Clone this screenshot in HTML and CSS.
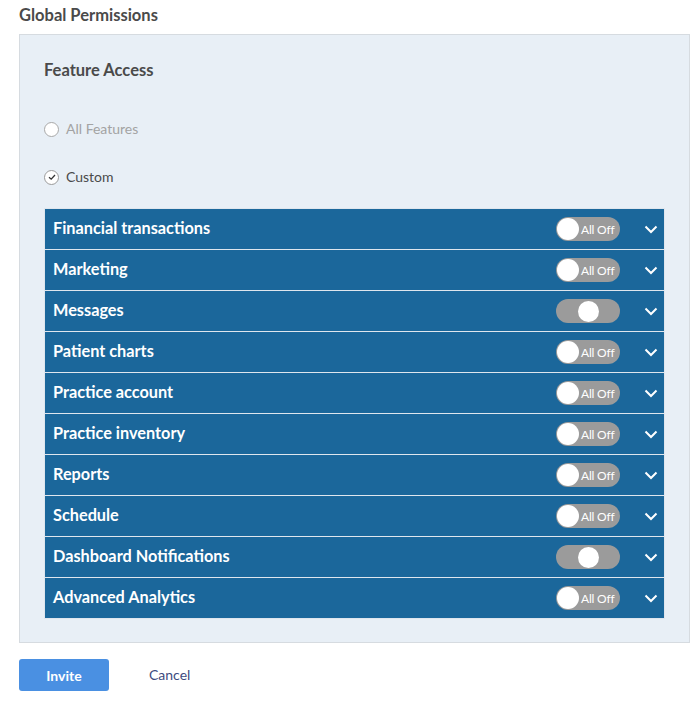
FILE: index.html
```html
<!DOCTYPE html>
<html>
<head>
<meta charset="utf-8">
<link rel="stylesheet" href="styles.css">
</head>
<body>
<div class="page">
  <h2 class="title">Global Permissions</h2>
  <div class="panel">
    <h3 class="subtitle">Feature Access</h3>
    <label class="radio disabled"><span class="circle"></span><span>All Features</span></label>
    <label class="radio checked"><span class="circle"><svg width="10" height="10" viewBox="0 0 10 10"><path d="M2 5.2 L4.2 7.2 L8 3" fill="none" stroke="#333" stroke-width="1.3"/></svg></span><span>Custom</span></label>
    <div class="list">
      <div class="row"><span class="name">Financial transactions</span><span class="toggle"><span class="knob"></span><span class="tlabel">All Off</span></span><svg class="chev" width="14" height="9" viewBox="0 0 14 9"><path d="M1.5 1.5 L7 7 L12.5 1.5" fill="none" stroke="#fff" stroke-width="2"/></svg></div>
      <div class="row"><span class="name">Marketing</span><span class="toggle"><span class="knob"></span><span class="tlabel">All Off</span></span><svg class="chev" width="14" height="9" viewBox="0 0 14 9"><path d="M1.5 1.5 L7 7 L12.5 1.5" fill="none" stroke="#fff" stroke-width="2"/></svg></div>
      <div class="row"><span class="name">Messages</span><span class="toggle mid"><span class="knob"></span></span><svg class="chev" width="14" height="9" viewBox="0 0 14 9"><path d="M1.5 1.5 L7 7 L12.5 1.5" fill="none" stroke="#fff" stroke-width="2"/></svg></div>
      <div class="row"><span class="name">Patient charts</span><span class="toggle"><span class="knob"></span><span class="tlabel">All Off</span></span><svg class="chev" width="14" height="9" viewBox="0 0 14 9"><path d="M1.5 1.5 L7 7 L12.5 1.5" fill="none" stroke="#fff" stroke-width="2"/></svg></div>
      <div class="row"><span class="name">Practice account</span><span class="toggle"><span class="knob"></span><span class="tlabel">All Off</span></span><svg class="chev" width="14" height="9" viewBox="0 0 14 9"><path d="M1.5 1.5 L7 7 L12.5 1.5" fill="none" stroke="#fff" stroke-width="2"/></svg></div>
      <div class="row"><span class="name">Practice inventory</span><span class="toggle"><span class="knob"></span><span class="tlabel">All Off</span></span><svg class="chev" width="14" height="9" viewBox="0 0 14 9"><path d="M1.5 1.5 L7 7 L12.5 1.5" fill="none" stroke="#fff" stroke-width="2"/></svg></div>
      <div class="row"><span class="name">Reports</span><span class="toggle"><span class="knob"></span><span class="tlabel">All Off</span></span><svg class="chev" width="14" height="9" viewBox="0 0 14 9"><path d="M1.5 1.5 L7 7 L12.5 1.5" fill="none" stroke="#fff" stroke-width="2"/></svg></div>
      <div class="row"><span class="name">Schedule</span><span class="toggle"><span class="knob"></span><span class="tlabel">All Off</span></span><svg class="chev" width="14" height="9" viewBox="0 0 14 9"><path d="M1.5 1.5 L7 7 L12.5 1.5" fill="none" stroke="#fff" stroke-width="2"/></svg></div>
      <div class="row"><span class="name">Dashboard Notifications</span><span class="toggle mid"><span class="knob"></span></span><svg class="chev" width="14" height="9" viewBox="0 0 14 9"><path d="M1.5 1.5 L7 7 L12.5 1.5" fill="none" stroke="#fff" stroke-width="2"/></svg></div>
      <div class="row"><span class="name">Advanced Analytics</span><span class="toggle"><span class="knob"></span><span class="tlabel">All Off</span></span><svg class="chev" width="14" height="9" viewBox="0 0 14 9"><path d="M1.5 1.5 L7 7 L12.5 1.5" fill="none" stroke="#fff" stroke-width="2"/></svg></div>
    </div>
  </div>
  <div class="actions">
    <button class="invite">Invite</button>
    <button class="cancel">Cancel</button>
  </div>
</div>
</body>
</html>
```
FILE: styles.css
```css
* { box-sizing: border-box; }
html, body { margin: 0; padding: 0; background: #fff; }
body { font-family: "Lato", "Liberation Sans", sans-serif; color: #4a4a4a; }
.page { padding: 5px 9px 0 19px; }
.title { margin: 0; font-size: 16.5px; font-weight: 700; line-height: 20px; color: #4a4a4a; }
.panel {
  margin-top: 9px;
  background: #e8eff6;
  border: 1px solid #d6dbe0;
  padding: 25px 24px 22px 24px;
  height: 609px;
}
.subtitle { margin: 0; font-size: 16.5px; font-weight: 700; line-height: 20px; color: #4a4a4a; }
.radio { display: flex; align-items: center; gap: 7px; font-size: 14px; line-height: 16px; }
.radio.disabled { margin-top: 41px; color: #a3a3a3; }
.radio.checked { margin-top: 32px; color: #4a4a4a; }
.circle {
  width: 15px; height: 15px; border-radius: 50%;
  border: 1px solid #9a9a9a; background: #fff;
  display: flex; align-items: center; justify-content: center;
}
.radio.disabled .circle { border-color: #a8a8a8; }
.list { margin-top: 23px; border: 1px solid #dfe6ee; border-bottom: none; }
.row {
  display: flex; align-items: center;
  height: 41px; background: #1b679b;
  border-bottom: 1px solid #dfe6ee;
  padding: 0 6px 0 8px;
}
.name { flex: 1; color: #fff; font-weight: 700; font-size: 16.3px; padding-bottom: 3px; }
.toggle {
  position: relative;
  width: 64px; height: 24px; border-radius: 12px;
  background: #9b9b9b;
  display: flex; align-items: center;
  padding-left: 1px;
}
.knob { width: 22px; height: 22px; border-radius: 50%; background: #fff; }
.toggle.mid { justify-content: center; padding-left: 0; }
.toggle.mid .knob { width: 21px; height: 21px; margin-left: 0; }
.tlabel { color: #fff; font-size: 12px; margin-left: 2px; letter-spacing: -0.2px; }
.chev { margin-left: 24px; }
.actions { display: flex; align-items: center; margin-top: 16px; }
.invite {
  width: 90px; height: 32px; border: none; border-radius: 3px;
  background: #4a90e2; color: #fff; font-family: inherit;
  font-weight: 700; font-size: 14px;
}
.cancel {
  margin-left: 28px; border: none; background: none;
  font-family: inherit; font-size: 14px; color: #3d4b80; padding: 0 12px 2px;
}
```
